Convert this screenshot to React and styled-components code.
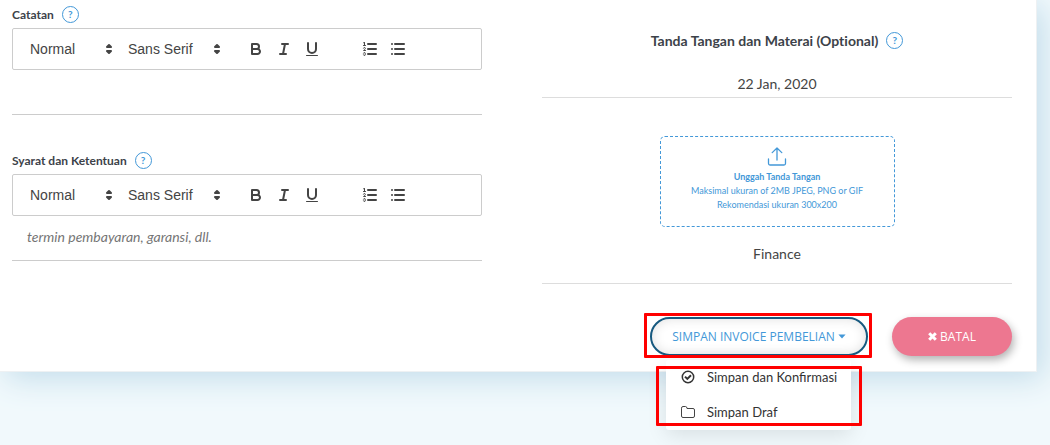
import React, { useState } from 'react'
import styled, { createGlobalStyle } from 'styled-components'

const GlobalStyle = createGlobalStyle`
    * {
        box-sizing: border-box;
    }

    body {
        margin: 0;
        background-color: #f1f9fc;
        font-family: Lato, sans-serif;
        font-size: 14px;
        color: #444;
    }

    button, input, select, textarea {
        margin: 0;
        padding: 0;
        border: 0;
        background: none;
        color: inherit;
        font: inherit;
        outline: none;
    }
`

const Page = styled.main`
    padding-right: 13px;
    padding-bottom: 73px;
    overflow: hidden;
`
const Card = styled.section`
    display: grid;
    grid-template-columns: 1fr 1fr;
    column-gap: 60px;
    padding: 0 24px 15px 12px;
    background-color: #fff;
    border: solid #eef1f3;
    border-width: 0 1px 1px 0;
    box-shadow: 6px 6px 30px #c2dcea;
`
const Field = styled.div`
    margin-bottom: 31px;
`
const LabelRow = styled.div`
    display: flex;
    align-items: center;
    gap: 8px;
    height: 28px;
`
const Label = styled.label`
    font-size: 12px;
    font-weight: 700;
    color: #3c4249;
`
const HelpButton = styled.button`
    display: flex;
    align-items: center;
    justify-content: center;
    width: 17px;
    height: 17px;
    border: 1px solid #4398d8;
    border-radius: 50%;
    font-size: 10px;
    font-weight: 700;
    color: #4398d8;
`
const Toolbar = styled.div`
    display: flex;
    align-items: center;
    height: 42px;
    padding: 0 8px;
    border: 1px solid #ccc;
    border-radius: 2px;
`
const Picker = styled.span`
    display: grid;
    align-items: center;
    width: ${props => props.width}px;

    select, svg {
        grid-area: 1 / 1;
    }

    select {
        appearance: none;
        height: 24px;
        padding-left: 9px;
        font-family: "Liberation Sans", Arial, sans-serif;
        font-weight: 500;
    }

    svg {
        justify-self: end;
        margin-right: 1px;
        pointer-events: none;
    }
`
const ToolGroup = styled.div`
    display: flex;
    margin-left: ${props => props.gap}px;
`
const Tool = styled.button`
    width: 28px;
    height: 24px;
    padding: 3px 5px;

    svg {
        display: block;
    }
`
const QuillSvg = styled.svg`
    width: 18px;
    height: 18px;
    fill: none;
    stroke: #444;
    stroke-width: 2;
    stroke-linecap: round;
    stroke-linejoin: round;

    .fill {
        fill: #444;
        stroke: none;
    }

    .thin {
        stroke-width: 1;
    }
`
const Editor = styled.textarea`
    display: block;
    width: 100%;
    height: 45px;
    padding: 11px 15px;
    border-bottom: 1px solid #ccc;
    font-size: 14px;
    line-height: 20px;
    resize: none;
    overflow: hidden;

    &::placeholder {
        color: #757575;
        font-style: italic;
        opacity: 1;
    }
`
const Signature = styled.div`
    display: flex;
    flex-direction: column;
    align-items: center;
    padding-top: 26px;
`
const Title = styled.h2`
    margin: 0;
    font-size: 14px;
    font-weight: 700;
    font-variant-ligatures: none;
    color: #3c4249;
`
const LineInput = styled.input`
    width: 100%;
    height: 28px;
    margin-top: 16px;
    border-bottom: 1px solid #ddd;
    text-align: center;
`
const RoleInput = styled(LineInput)`
    height: 57px;
    margin-top: 0;
    padding-bottom: 4px;
`
const Upload = styled.label`
    display: flex;
    flex-direction: column;
    align-items: center;
    width: 50%;
    height: 91px;
    margin-top: 38px;
    padding-top: 10px;
    border: 1px dashed #4398d8;
    border-radius: 5px;
    font-size: 9px;
    line-height: 14px;
    color: #4398d8;
    cursor: pointer;

    svg {
        margin-bottom: 4px;
    }

    input {
        display: none;
    }
`
const Actions = styled.div`
    display: flex;
    align-self: flex-end;
    gap: 24px;
    margin-top: 33px;
`
const Dropdown = styled.div`
    position: relative;
`
const Button = styled.button`
    display: flex;
    align-items: center;
    justify-content: center;
    gap: 3px;
    width: ${props => props.width}px;
    height: 39px;
    border-radius: 20px;
    font-family: "Open Sans", sans-serif;
    font-size: 12px;
`
const SaveButton = styled(Button)`
    border: 2px solid #17597f;
    color: #4398d8;
    box-shadow: inset 0 0 12px rgba(0, 0, 0, 0.12);
`
const CancelButton = styled(Button)`
    background-color: #ed7790;
    color: #fff;
    box-shadow: 2px 4px 8px rgba(0, 0, 0, 0.3);
`
const Menu = styled.ul`
    position: absolute;
    top: 43px;
    left: 16px;
    width: 185px;
    margin: 0;
    padding: 0;
    list-style: none;
    background-color: #fff;
    border-radius: 3px;
    box-shadow: 0 5px 20px rgba(0, 0, 0, 0.1);
`
const MenuItem = styled.button`
    display: flex;
    align-items: center;
    gap: 11px;
    width: 100%;
    height: 35px;
    padding: 0 0 2px 14px;
    font-size: 13px;
    color: #333;
    white-space: nowrap;
`
const Highlight = styled.div`
    position: absolute;
    top: ${props => props.top}px;
    left: ${props => props.left}px;
    width: ${props => props.width}px;
    height: ${props => props.height}px;
    border: 3px solid #f00;
    border-radius: 1px;
    pointer-events: none;
`

const Arrows = () => (
    <QuillSvg viewBox='0 0 18 18'>
        <polygon className='fill' points='7 11 9 13 11 11 7 11' />
        <polygon className='fill' points='7 7 9 5 11 7 7 7' />
        <path d='M7 11L9 13L11 11ZM7 7L9 5L11 7Z' />
    </QuillSvg>
)

const BoldIcon = () => (
    <QuillSvg viewBox='0 0 18 18'>
        <path d='M5,4H9.5A2.5,2.5,0,0,1,12,6.5v0A2.5,2.5,0,0,1,9.5,9H5V4Z' />
        <path d='M5,9h5.5A2.5,2.5,0,0,1,13,11.5v0A2.5,2.5,0,0,1,10.5,14H5V9Z' />
    </QuillSvg>
)

const ItalicIcon = () => (
    <QuillSvg viewBox='0 0 18 18'>
        <line x1='7' x2='13' y1='4' y2='4' />
        <line x1='5' x2='11' y1='14' y2='14' />
        <line x1='8' x2='10' y1='14' y2='4' />
    </QuillSvg>
)

const UnderlineIcon = () => (
    <QuillSvg viewBox='0 0 18 18'>
        <path d='M5,3V9a4.012,4.012,0,0,0,4,4H9a4.012,4.012,0,0,0,4-4V3' />
        <rect className='fill' height='1' rx='0.5' ry='0.5' width='12' x='3' y='15' />
    </QuillSvg>
)

const OrderedIcon = () => (
    <QuillSvg viewBox='0 0 18 18'>
        <line x1='7' x2='15' y1='4' y2='4' />
        <line x1='7' x2='15' y1='9' y2='9' />
        <line x1='7' x2='15' y1='14' y2='14' />
        <line className='thin' x1='2.5' x2='4.5' y1='5.5' y2='5.5' />
        <path className='fill' d='M3.5,6A0.5,0.5,0,0,1,3,5.5V3.085l-0.276.138A0.5,0.5,0,0,1,2.053,3c-0.124-.247-0.023-0.324.224-0.447l1-.5A0.5,0.5,0,0,1,4,2.5v3A0.5,0.5,0,0,1,3.5,6Z' />
        <path className='thin' d='M4.5,10.5h-2c0-.234,1.85-1.076,1.85-2.234A0.959,0.959,0,0,0,2.5,8.156' />
        <path className='thin' d='M2.5,14.846a0.959,0.959,0,0,0,1.85-.109A0.7,0.7,0,0,0,3.75,14a0.688,0.688,0,0,0,.6-0.736,0.959,0.959,0,0,0-1.85-.109' />
    </QuillSvg>
)

const BulletIcon = () => (
    <QuillSvg viewBox='0 0 18 18'>
        <line x1='6' x2='15' y1='4' y2='4' />
        <line x1='6' x2='15' y1='9' y2='9' />
        <line x1='6' x2='15' y1='14' y2='14' />
        <line x1='3' x2='3' y1='4' y2='4' />
        <line x1='3' x2='3' y1='9' y2='9' />
        <line x1='3' x2='3' y1='14' y2='14' />
    </QuillSvg>
)

const UploadIcon = () => (
    <svg width='20' height='19' viewBox='0 0 20 19' fill='none' stroke='#4398d8' strokeWidth='1.3' strokeLinecap='round' strokeLinejoin='round'>
        <path d='M10 13V1.2M5.2 5.6L10 1L14.8 5.6' />
        <path d='M1.5 12V16.5Q1.5 18 3 18H17Q18.5 18 18.5 16.5V12' />
    </svg>
)

const CaretIcon = () => (
    <svg width='8' height='5' viewBox='0 0 8 5' fill='currentColor'>
        <path d='M0.4 0.4H7.6L4 4.4Z' />
    </svg>
)

const CrossIcon = () => (
    <svg width='9' height='9' viewBox='0 0 9 9' fill='none' stroke='currentColor' strokeWidth='3'>
        <path d='M1.2 1.2L7.8 7.8M7.8 1.2L1.2 7.8' />
    </svg>
)

const CheckIcon = () => (
    <svg width='16' height='14' viewBox='0 0 16 14' fill='none' stroke='#333'>
        <circle cx='8' cy='7' r='5.7' strokeWidth='1.5' />
        <path d='M5 6.6L7.3 8.9L11 5.2' strokeWidth='2' />
    </svg>
)

const FolderIcon = () => (
    <svg width='16' height='14' viewBox='0 0 16 14' fill='none' stroke='#444' strokeWidth='1'>
        <path d='M1.5 3.2Q1.5 1.5 3 1.5H5.6Q7 1.5 7 3.5H13Q14.5 3.5 14.5 5V11Q14.5 12.5 13 12.5H3Q1.5 12.5 1.5 11Z' />
    </svg>
)

function Help({ topic }) {
    return <HelpButton type='button' aria-label={`Bantuan ${topic}`}>?</HelpButton>
}

function RichText({ id, label, placeholder }) {
    return (
        <Field>
            <LabelRow>
                <Label htmlFor={id}>{label}</Label>
                <Help topic={label} />
            </LabelRow>
            <Toolbar>
                <Picker width={98}>
                    <select aria-label='Ukuran'>
                        <option>Normal</option>
                        <option>Heading</option>
                    </select>
                    <Arrows />
                </Picker>
                <Picker width={108}>
                    <select aria-label='Huruf'>
                        <option>Sans Serif</option>
                        <option>Serif</option>
                    </select>
                    <Arrows />
                </Picker>
                <ToolGroup gap={15}>
                    <Tool type='button' aria-label='Bold'><BoldIcon /></Tool>
                    <Tool type='button' aria-label='Italic'><ItalicIcon /></Tool>
                    <Tool type='button' aria-label='Underline'><UnderlineIcon /></Tool>
                </ToolGroup>
                <ToolGroup gap={30}>
                    <Tool type='button' aria-label='Ordered list'><OrderedIcon /></Tool>
                    <Tool type='button' aria-label='Bullet list'><BulletIcon /></Tool>
                </ToolGroup>
            </Toolbar>
            <Editor id={id} placeholder={placeholder} />
        </Field>
    )
}

export default function App() {
    const [open, setOpen] = useState(true)

    return (
        <Page>
            <GlobalStyle />
            <Card>
                <div>
                    <RichText id='catatan' label='Catatan' />
                    <RichText id='syarat' label='Syarat dan Ketentuan' placeholder='termin pembayaran, garansi, dll.' />
                </div>
                <Signature>
                    <LabelRow>
                        <Title>Tanda Tangan dan Materai (Optional)</Title>
                        <Help topic='Tanda Tangan' />
                    </LabelRow>
                    <LineInput aria-label='Tanggal' defaultValue='22 Jan, 2020' />
                    <Upload>
                        <UploadIcon />
                        <strong>Unggah Tanda Tangan</strong>
                        <span>Maksimal ukuran of 2MB JPEG, PNG or GIF</span>
                        <span>Rekomendasi ukuran 300x200</span>
                        <input type='file' accept='image/*' />
                    </Upload>
                    <RoleInput aria-label='Jabatan' defaultValue='Finance' />
                    <Actions>
                        <Dropdown>
                            <SaveButton type='button' width={218} aria-expanded={open} onClick={() => setOpen(!open)}>
                                SIMPAN INVOICE PEMBELIAN
                                <CaretIcon />
                            </SaveButton>
                            {open &&
                                <Menu>
                                    <li><MenuItem type='button'><CheckIcon />Simpan dan Konfirmasi</MenuItem></li>
                                    <li><MenuItem type='button'><FolderIcon />Simpan Draf</MenuItem></li>
                                </Menu>
                            }
                            <Highlight top={-4} left={-6} width={228} height={45} />
                            <Highlight top={49} left={6} width={206} height={60} />
                        </Dropdown>
                        <CancelButton type='button' width={120}>
                            <CrossIcon />
                            BATAL
                        </CancelButton>
                    </Actions>
                </Signature>
            </Card>
        </Page>
    )
}
